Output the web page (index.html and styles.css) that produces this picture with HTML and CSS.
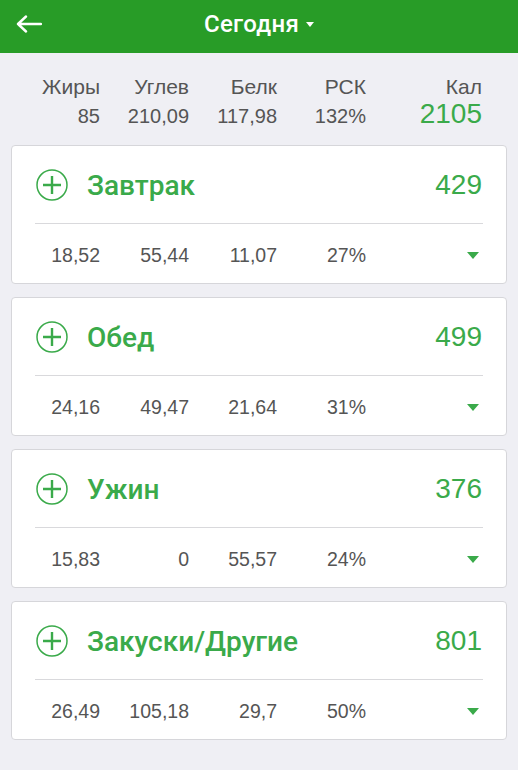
FILE: index.html
```html
<!DOCTYPE html>
<html lang="ru">
<head>
  <meta charset="UTF-8">
  <title>Сегодня</title>
  <link rel="stylesheet" href="styles.css">
</head>
<body>

  <!-- верхняя панель -->
  <header class="topbar">
    <div class="back">
      <svg width="26" height="18" viewBox="0 0 26 18">
        <path d="M25 9 H2 M10 1.5 L2 9 L10 16.5" fill="none" stroke="#fff" stroke-width="2.4" stroke-linecap="round" stroke-linejoin="round"/>
      </svg>
    </div>
    <div class="day">Сегодня <span class="caret"></span></div>
    <div></div>
  </header>

  <!-- итоги за день -->
  <section class="summary">
    <div class="lbl">Жиры</div>
    <div class="lbl">Углев</div>
    <div class="lbl">Белк</div>
    <div class="lbl">РСК</div>
    <div class="lbl">Кал</div>
    <div class="val">85</div>
    <div class="val">210,09</div>
    <div class="val">117,98</div>
    <div class="val">132%</div>
    <div class="val total">2105</div>
  </section>

  <div class="meals">

    <div class="card">
      <div class="card-head">
        <svg class="plus" width="32" height="32" viewBox="0 0 32 32">
          <circle cx="16" cy="16" r="15" fill="none" stroke="#3aaa4a" stroke-width="1.5"/>
          <path d="M16 7 V25 M7 16 H25" stroke="#3aaa4a" stroke-width="2.4"/>
        </svg>
        <span class="meal-name">Завтрак</span>
        <span class="meal-kcal">429</span>
      </div>
      <div class="card-row">
        <span>18,52</span>
        <span>55,44</span>
        <span>11,07</span>
        <span>27%</span>
        <span class="more"></span>
      </div>
    </div>

    <div class="card">
      <div class="card-head">
        <svg class="plus" width="32" height="32" viewBox="0 0 32 32">
          <circle cx="16" cy="16" r="15" fill="none" stroke="#3aaa4a" stroke-width="1.5"/>
          <path d="M16 7 V25 M7 16 H25" stroke="#3aaa4a" stroke-width="2.4"/>
        </svg>
        <span class="meal-name">Обед</span>
        <span class="meal-kcal">499</span>
      </div>
      <div class="card-row">
        <span>24,16</span>
        <span>49,47</span>
        <span>21,64</span>
        <span>31%</span>
        <span class="more"></span>
      </div>
    </div>

    <div class="card">
      <div class="card-head">
        <svg class="plus" width="32" height="32" viewBox="0 0 32 32">
          <circle cx="16" cy="16" r="15" fill="none" stroke="#3aaa4a" stroke-width="1.5"/>
          <path d="M16 7 V25 M7 16 H25" stroke="#3aaa4a" stroke-width="2.4"/>
        </svg>
        <span class="meal-name">Ужин</span>
        <span class="meal-kcal">376</span>
      </div>
      <div class="card-row">
        <span>15,83</span>
        <span>0</span>
        <span>55,57</span>
        <span>24%</span>
        <span class="more"></span>
      </div>
    </div>

    <div class="card">
      <div class="card-head">
        <svg class="plus" width="32" height="32" viewBox="0 0 32 32">
          <circle cx="16" cy="16" r="15" fill="none" stroke="#3aaa4a" stroke-width="1.5"/>
          <path d="M16 7 V25 M7 16 H25" stroke="#3aaa4a" stroke-width="2.4"/>
        </svg>
        <span class="meal-name">Закуски/Другие</span>
        <span class="meal-kcal">801</span>
      </div>
      <div class="card-row">
        <span>26,49</span>
        <span>105,18</span>
        <span>29,7</span>
        <span>50%</span>
        <span class="more"></span>
      </div>
    </div>

  </div>

</body>
</html>
```

FILE: styles.css
```css
  html, body {
    margin: 0;
    padding: 0;
    background: #efeff4;
    font-family: 'Liberation Sans', Arial, sans-serif;
    color: #555;
  }

  .topbar {
    height: 53px;
    background: #289c27;
    display: grid;
    grid-template-columns: 1fr auto 1fr;
    align-items: center;
  }

  .back {
    padding-left: 16px;
    height: 18px;
    margin-top: -5px;
  }

  .back svg {
    display: block;
  }

  .day {
    font-family: Roboto, 'Liberation Sans', sans-serif;
    font-weight: 500;
    font-size: 24px;
    letter-spacing: 0.3px;
    color: #fff;
    display: flex;
    align-items: center;
    margin-top: -6px;
  }

  .caret {
    width: 0;
    height: 0;
    border-left: 4.5px solid transparent;
    border-right: 4.5px solid transparent;
    border-top: 5.5px solid #fff;
    margin-left: 7px;
    margin-top: 1px;
  }

  /* итоги */
  .summary {
    display: grid;
    grid-template-columns: 65px 89px 88px 89px 1fr;
    grid-template-rows: 24px 32px;
    align-items: baseline;
    padding: 22px 36px 0 35px;
  }

  .lbl, .val {
    text-align: right;
  }

  .lbl {
    font-size: 21px;
    line-height: 24px;
    color: #555;
  }

  .val {
    font-size: 20px;
    line-height: 30px;
    color: #555;
  }

  .val.total {
    font-size: 28px;
    color: #3aaa4a;
  }

  /* приёмы пищи */
  .meals {
    padding: 14px 11px 0;
    display: flex;
    flex-direction: column;
    gap: 13px;
  }

  .card {
    background: #fff;
    border: 1px solid #d6d6da;
    border-radius: 4px;
    padding: 19px 23px 13px;
  }

  .card-head {
    height: 40px;
    display: flex;
    align-items: center;
    border-bottom: 1px solid #d9d9dc;
    padding-bottom: 18px;
  }

  .plus {
    margin-left: 1px;
    flex-shrink: 0;
  }

  .meal-name {
    font-family: Roboto, 'Liberation Sans', sans-serif;
    font-weight: 500;
    font-size: 28px;
    color: #3aaa4a;
    margin-left: 19px;
    flex: 1;
  }

  .meal-kcal {
    font-size: 28px;
    color: #3aaa4a;
    margin-right: 1px;
  }

  .card-row {
    display: grid;
    grid-template-columns: 65px 89px 88px 89px 1fr;
    align-items: center;
    margin-top: 16px;
    height: 30px;
    font-size: 19.5px;
    line-height: 30px;
  }

  .card-row span {
    text-align: right;
  }

  .card-row .more {
    justify-self: end;
    width: 0;
    height: 0;
    border-left: 6px solid transparent;
    border-right: 6px solid transparent;
    border-top: 7px solid #3aaa4a;
    margin-right: 4px;
  }
```
